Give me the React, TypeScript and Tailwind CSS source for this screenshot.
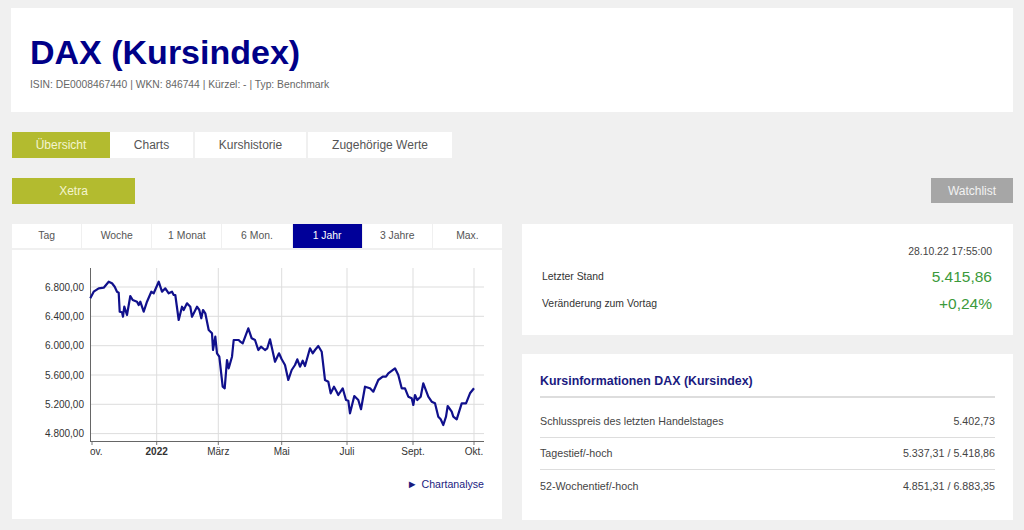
const font = { fontFamily: '"Liberation Sans", Arial, sans-serif' };

const pricePath =
  "90.3,298.3 93.7,291.7 98.7,288.3 103.7,287.7 108.7,281.7 112,283.3 114.7,286.7 117,291.7 118.7,292.7 119.7,311.7 122,312.3 123,316.7 124.3,306.7 127,315 130.3,296 132.7,300 137,301.7 138.7,305 140.3,301.7 143.7,311.7 147,301.7 151.3,291.7 153.7,293.3 158.7,281.7 162,291.7 165.3,288.3 168.7,293.3 172,291.7 173.7,295 175.3,295 178.7,320 182,306.7 183.7,310 187,303.3 190.3,306.7 192,316.7 197,306.7 199.3,310 201.3,318.3 203,310 205.3,313.3 208.7,330 212,333.3 213,350 215.3,336.7 217,353.3 219.3,356.7 222.7,386.7 224.7,388.3 227,360 228.7,368.3 232,356.7 233.7,340 238.7,340 240.3,341.7 242.7,343.3 248.3,328.3 251.7,338.3 255,340 258.3,350 261,346.7 265,350 267.3,348.3 270,339.3 275,361.7 279,353.3 281.7,359.3 285,365 288.3,380 291.7,370 295,365 297.3,359.3 300,366.7 302.7,360.7 305,366 310,348.3 312.7,353.3 315,350 318.3,346 321.7,351.7 325,380 328.3,381.7 330.7,393.3 334,386.7 336.7,391.7 338.3,395 342.7,388.3 346,400 348.3,400.7 350,413.3 354.3,396 358.3,400 361,409.3 365,386.7 370,388.3 373.3,391.7 378.3,380 382.7,376.7 386,376.7 388.3,373.3 395,368.3 398.3,375 401.7,388.3 405,388.3 408.3,396.7 411.7,398.3 413.3,405 415,395 417.3,400 420.7,396.7 423.3,383.3 428.3,396.7 431.7,401.7 435,403.3 438.3,416.7 440.7,419.3 443.3,425 446,416.7 447.7,406 451.7,411.7 453.3,416.7 456.7,419.3 461.7,403.3 466,403.3 470,393.3 474,388.3";

const yLabels = [
  { y: 287, t: "6.800,00" },
  { y: 316.3, t: "6.400,00" },
  { y: 345.7, t: "6.000,00" },
  { y: 375, t: "5.600,00" },
  { y: 404.3, t: "5.200,00" },
  { y: 433.6, t: "4.800,00" },
];

const xGrid = [156.7, 218.3, 281.7, 347, 413, 474];

const xLabels = [
  { x: 156.7, t: "2022", bold: true },
  { x: 218.3, t: "März" },
  { x: 281.7, t: "Mai" },
  { x: 347, t: "Juli" },
  { x: 413, t: "Sept." },
  { x: 474, t: "Okt." },
];

function PriceChart() {
  return (
    <svg width="490" height="220" viewBox="12 250 490 220" className="block">
      {yLabels.map((l) => (
        <g key={l.t}>
          <line x1="90" x2="484" y1={l.y} y2={l.y} stroke="#dddddd" strokeWidth="1" />
          <text x="84" y={l.y + 3.5} textAnchor="end" fontSize="10" fill="#333" style={font}>
            {l.t}
          </text>
        </g>
      ))}
      {xGrid.map((x) => (
        <g key={x}>
          <line x1={x} x2={x} y1="268" y2="441" stroke="#dddddd" strokeWidth="1" />
          <line x1={x} x2={x} y1="441" y2="445" stroke="#777" strokeWidth="1" />
        </g>
      ))}
      <line x1="92" x2="92" y1="441" y2="445" stroke="#777" strokeWidth="1" />
      <line x1="90.5" x2="90.5" y1="268" y2="442" stroke="#666" strokeWidth="1" />
      <line x1="90" x2="484" y1="441.5" y2="441.5" stroke="#666" strokeWidth="1" />
      <text x="90" y="455" fontSize="10" fill="#333" style={font}>
        ov.
      </text>
      {xLabels.map((l) => (
        <text
          key={l.t}
          x={l.x}
          y="455"
          textAnchor="middle"
          fontSize="10"
          fontWeight={l.bold ? "bold" : "normal"}
          fill="#333"
          style={font}
        >
          {l.t}
        </text>
      ))}
      <polyline points={pricePath} fill="none" stroke="#10108c" strokeWidth="2.2" strokeLinejoin="round" />
    </svg>
  );
}

const periods = ["Tag", "Woche", "1 Monat", "6 Mon.", "1 Jahr", "3 Jahre", "Max."];

const infoRows = [
  { label: "Schlusspreis des letzten Handelstages", value: "5.402,73" },
  { label: "Tagestief/-hoch", value: "5.337,31 / 5.418,86" },
  { label: "52-Wochentief/-hoch", value: "4.851,31 / 6.883,35" },
];

export default function App() {
  return (
    <div className="min-h-[530px] bg-[#f0f0f0] pt-[8px] pl-[11px] pr-[11px]" style={font}>
      {/* Kopfbereich */}
      <div className="bg-white pl-[19px] pt-[24px] pb-[19px]">
        <h1 className="text-[34px] leading-[40px] font-bold text-[#000088]">DAX (Kursindex)</h1>
        <div className="mt-[5px] text-[10.3px] leading-[16px] text-[#666]">
          ISIN: DE0008467440 | WKN: 846744 | Kürzel: - | Typ: Benchmark
        </div>
      </div>

      {/* Navigation */}
      <div className="mt-[20px] ml-px flex gap-[2px] text-[12px] text-[#555]">
        <div className="flex h-[26px] w-[98px] items-center justify-center bg-[#b3bb2f] text-[#f3f5d0]">Übersicht</div>
        <div className="-ml-[2px] flex h-[26px] w-[83px] items-center justify-center bg-white">Charts</div>
        <div className="flex h-[26px] w-[111px] items-center justify-center bg-white">Kurshistorie</div>
        <div className="flex h-[26px] w-[144px] items-center justify-center bg-white">Zugehörige Werte</div>
      </div>

      <div className="mt-[20px] ml-px flex items-start justify-between text-[12px]">
        <div className="flex h-[26px] w-[123px] items-center justify-center bg-[#b3bb2f] text-[#f3f5d0]">Xetra</div>
        <div className="flex h-[25px] w-[82px] items-center justify-center bg-[#a6a6a6] text-[#f2f2f2]">Watchlist</div>
      </div>

      <div className="mt-[20px] ml-px flex gap-[20px]">
        {/* Chart */}
        <div className="w-[490px]">
          <div className="flex h-[24px] gap-px bg-[#f0f0f0] text-[10.4px] text-[#555]">
            {periods.map((p) => (
              <div
                key={p}
                className={
                  p === "1 Jahr"
                    ? "flex flex-1 items-center justify-center bg-[#000099] text-white"
                    : "flex flex-1 items-center justify-center bg-white"
                }
              >
                {p}
              </div>
            ))}
          </div>
          <div className="mt-[2px] h-[269px] bg-white">
            <PriceChart />
            <div className="mt-[6px] flex items-center justify-end pr-[18px] text-[10.6px] text-[#1a1a80]">
              <span className="mr-[4px] text-[11px] leading-[16px]">►</span>
              <span className="leading-[16px]">Chartanalyse</span>
            </div>
          </div>
        </div>

        {/* Kursdaten */}
        <div className="w-[491px]">
          <div className="h-[111px] bg-white pl-[20px] pr-[21px] pt-[20px]">
            <div className="text-right text-[10.4px] leading-[16px] text-[#444]">28.10.22 17:55:00</div>
            <div className="mt-[6px] flex items-center justify-between">
              <span className="text-[10.4px] text-[#333]">Letzter Stand</span>
              <span className="text-[15.5px] leading-[22px] text-[#3b9a3b]">5.415,86</span>
            </div>
            <div className="mt-[5px] flex items-center justify-between">
              <span className="text-[10.4px] text-[#333]">Veränderung zum Vortag</span>
              <span className="text-[15.5px] leading-[22px] text-[#3b9a3b]">+0,24%</span>
            </div>
          </div>

          <div className="mt-[19px] h-[166px] bg-white pl-[18px] pr-[18px] pt-[19px]">
            <div className="border-b-2 border-[#dddddd] pb-[7px] text-[12.4px] leading-[16px] font-bold text-[#1a1a80]">
              Kursinformationen DAX (Kursindex)
            </div>
            <div className="mt-[8px]">
              {infoRows.map((r, i) => (
                <div
                  key={r.label}
                  className={
                    i < infoRows.length - 1
                      ? "flex h-[32px] items-center justify-between border-b border-[#dddddd] text-[10.7px] text-[#444]"
                      : "flex h-[32px] items-center justify-between text-[10.7px] text-[#444]"
                  }
                >
                  <span>{r.label}</span>
                  <span>{r.value}</span>
                </div>
              ))}
            </div>
          </div>
        </div>
      </div>
    </div>
  );
}
